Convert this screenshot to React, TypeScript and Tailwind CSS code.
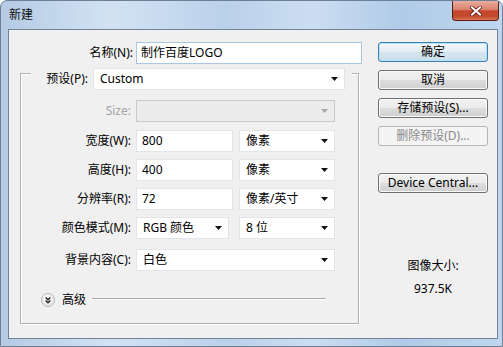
import React from 'react';

const Arrow = ({ color = '#111' }: { color?: string }) => (
  <svg width="7" height="4" viewBox="0 0 7 4" className="shrink-0">
    <polygon points="0,0 7,0 3.5,4" fill={color} />
  </svg>
);

function Select({ className, value, disabled }: { className: string; value?: string; disabled?: boolean }) {
  return (
    <div
      className={`h-[22px] flex items-center justify-between pl-[6px] pr-[6px] border ${
        disabled ? 'bg-[#ececec] border-[#c9c9c9]' : 'bg-white border-[#e3e4e8]'
      } ${className}`}
    >
      <span>{value}</span>
      <Arrow color={disabled ? '#a8a8a8' : '#111'} />
    </div>
  );
}

function TextBox({ className, value }: { className: string; value: string }) {
  return (
    <div className={`h-[22px] flex items-center pl-[5px] bg-white border border-[#e3e4e8] ${className}`}>
      {value}
    </div>
  );
}

function Button({ label, primary, disabled, className = '' }: { label: string; primary?: boolean; disabled?: boolean; className?: string }) {
  const look = primary
    ? 'border-[#3c7fb1] bg-[linear-gradient(#f3f8fb,#e4eef5_48%,#d5e5ef_52%,#c9dfec)] shadow-[inset_0_0_0_1px_#b6e2f8]'
    : disabled
    ? 'border-[#b2b6b9] bg-[#f4f4f4] text-[#8a8a8a]'
    : 'border-[#707070] bg-[linear-gradient(#f2f2f2,#ebebeb_48%,#dddddd_52%,#cfcfcf)] shadow-[inset_0_0_0_1px_#fbfbfb]';
  return (
    <div className={`h-[20px] w-[110px] rounded-[3px] border flex items-center justify-center ${look} ${className}`}>
      {label}
    </div>
  );
}

function Row({ label, children, className = '', muted }: { label: string; children: React.ReactNode; className?: string; muted?: boolean }) {
  return (
    <div className={`flex items-center ${className}`}>
      <span className={`w-[110px] text-right mr-[5px] ${muted ? 'text-[#a3a3a3]' : ''}`}>{label}</span>
      {children}
    </div>
  );
}

export default function App() {
  return (
    <div className="w-[503px] h-[347px] overflow-hidden rounded-t-[7px] border border-[#6d7f94] bg-[linear-gradient(to_right,#b4cbe4,#d2e2f3_22%,#bad1ea_45%,#cbddf1_62%,#b0cbe8_80%,#bfd6ee)] font-['Noto_Sans','Noto_Sans_CJK_SC',sans-serif] text-[12px] leading-[16px] text-black">
      <div className="h-[28px] flex items-start justify-between">
        <span className="pl-[8px] mt-[6px] text-[#111]">新建</span>
        <div className="mt-0 mr-[3px] w-[47px] h-[20px] rounded-b-[4px] border border-t-0 border-[#5b1f17] bg-[linear-gradient(#e9ad9f,#d9826e_45%,#c7472e_52%,#c14a2f_80%,#dc7553)] flex items-center justify-center">
          <svg width="12" height="10" viewBox="0 0 12 10">
            <path d="M2 1.5 L10 8.5 M10 1.5 L2 8.5" stroke="#5a1a10" strokeWidth="3.6" strokeLinecap="square" />
            <path d="M2 1.5 L10 8.5 M10 1.5 L2 8.5" stroke="#fff" strokeWidth="2" strokeLinecap="square" />
          </svg>
        </div>
      </div>

      <div className="ml-[7px] mr-[4px] h-[310px] border border-[#71849a] bg-[#f0f0f0] flex">
        <div className="w-[360px]">
          <div className="mt-[12px] flex items-center">
            <span className="w-[124px] text-right mr-[3px]">名称(N):</span>
            <div className="w-[226px] h-[22px] border border-[#a9c6e2] bg-white pl-[4px] flex items-center">制作百度LOGO</div>
          </div>

          <div className="ml-[11px] mt-[9px] w-[339px] border border-[#b2b2b2] shadow-[inset_1px_1px_0_#fff,1px_1px_0_#fff] pb-[16px]">
            <div className="-mt-[6px] ml-[10px] w-[321px] bg-[#f0f0f0] flex items-center">
              <span className="w-[57px] text-right mr-[5px]">预设(P):</span>
              <Select className="w-[252px]" value="Custom" />
            </div>

            <Row label="Size:" muted className="mt-[10px]">
              <Select className="w-[199px]" disabled />
            </Row>
            <Row label="宽度(W):" className="mt-[8px]">
              <TextBox className="w-[97px]" value="800" />
              <Select className="w-[96px] ml-[6px]" value="像素" />
            </Row>
            <Row label="高度(H):" className="mt-[7px]">
              <TextBox className="w-[97px]" value="400" />
              <Select className="w-[96px] ml-[6px]" value="像素" />
            </Row>
            <Row label="分辨率(R):" className="mt-[7px]">
              <TextBox className="w-[97px]" value="72" />
              <Select className="w-[96px] ml-[6px]" value="像素/英寸" />
            </Row>
            <Row label="颜色模式(M):" className="mt-[7px]">
              <Select className="w-[93px]" value="RGB 颜色" />
              <Select className="w-[96px] ml-[10px]" value="8 位" />
            </Row>
            <Row label="背景内容(C):" className="mt-[10px]">
              <Select className="w-[199px]" value="白色" />
            </Row>

            <div className="mt-[22px] ml-[20px] mr-[32px] h-[14px] flex items-center">
              <svg width="14" height="14" viewBox="0 0 14 14" className="shrink-0">
                <defs>
                  <radialGradient id="adv" cx="0.45" cy="0.35" r="0.7">
                    <stop offset="0" stopColor="#ffffff" />
                    <stop offset="1" stopColor="#e2e2e2" />
                  </radialGradient>
                </defs>
                <circle cx="7" cy="7" r="6.5" fill="url(#adv)" stroke="#b5b5b5" />
                <path d="M4.6 4.6 L7 6.8 L9.4 4.6 M4.6 7.6 L7 9.8 L9.4 7.6" fill="none" stroke="#222" strokeWidth="1.3" />
              </svg>
              <span className="ml-[7px]">高级</span>
              <div className="ml-[6px] -mt-[3px] flex-1 h-[2px] border-t border-[#a9a9a9] border-b border-b-white" />
            </div>
          </div>
        </div>

        <div className="ml-[9px] w-[110px] flex flex-col items-center">
          <Button label="确定" primary className="mt-[12px]" />
          <Button label="取消" className="mt-[8px]" />
          <Button label="存储预设(S)..." className="mt-[8px]" />
          <Button label="删除预设(D)..." disabled className="mt-[8px]" />
          <Button label="Device Central..." className="mt-[27px]" />
          <div className="mt-[65px]">图像大小:</div>
          <div className="mt-[7px]">937.5K</div>
        </div>
      </div>
    </div>
  );
}
